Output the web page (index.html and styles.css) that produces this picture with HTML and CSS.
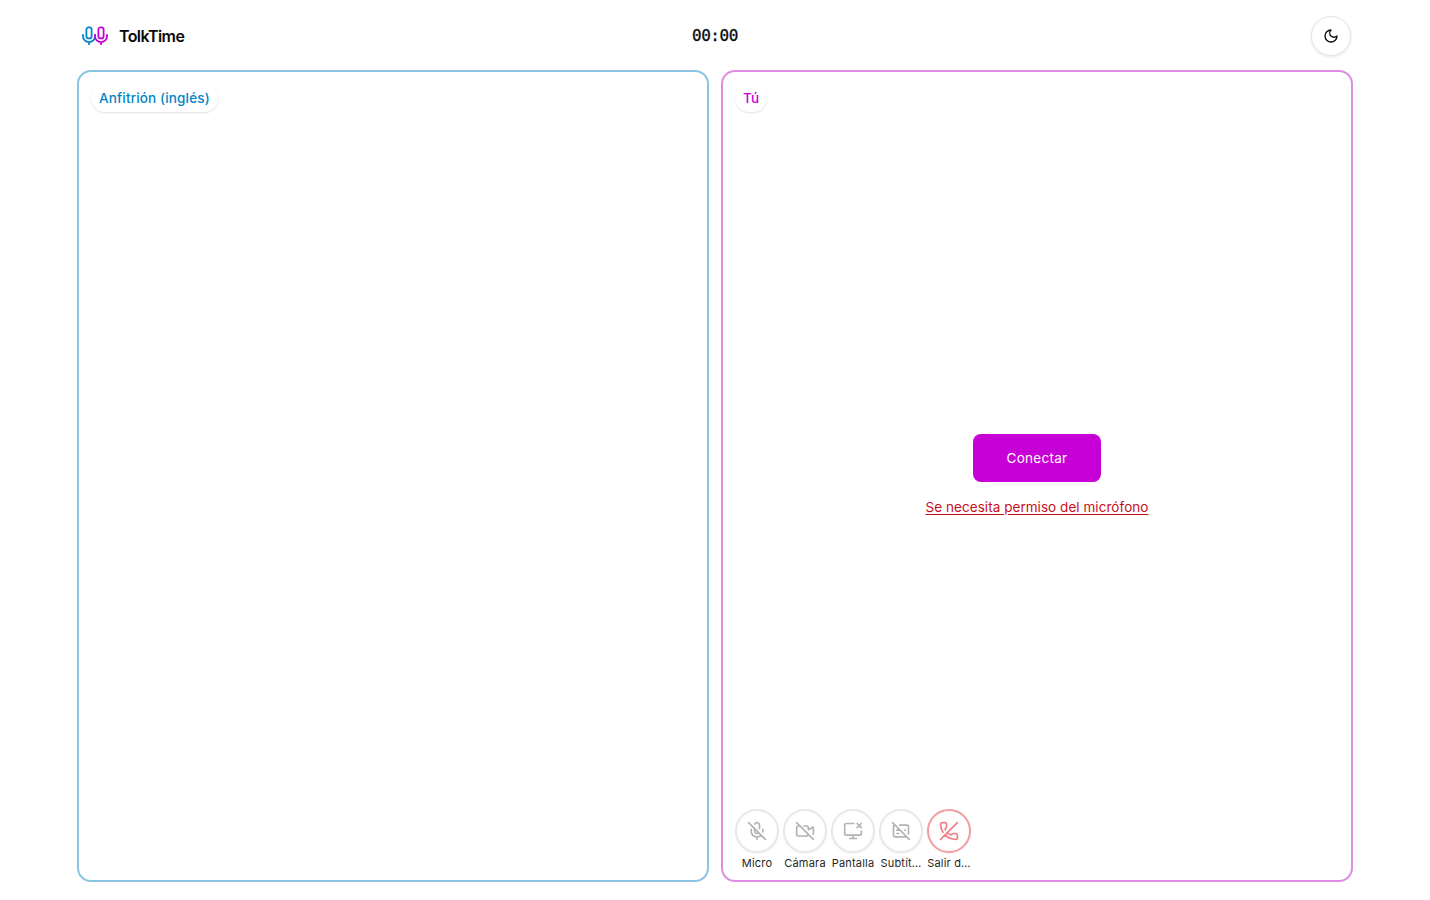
FILE: index.html
```html
<!DOCTYPE html>
<html lang="es">
<head>
    <meta charset="UTF-8">
    <meta name="viewport" content="width=device-width, initial-scale=1.0">
    <title>TolkTime</title>
    <link rel="stylesheet" href="styles.css">
</head>
<body>
    <div class="app">
        <header class="header">
            <div class="brand">
                <svg class="logo" viewBox="0 0 28 20" fill="none" stroke-width="1.8" stroke-linecap="round" stroke-linejoin="round">
                    <g stroke="#0084c7">
                        <rect x="5.4" y="1.4" width="5.2" height="11" rx="2.2"/>
                        <path d="M2 9v1.2a6 6 0 0 0 12 0V9M8 16.2v2"/>
                    </g>
                    <g stroke="#c800d8">
                        <rect x="17.4" y="1.4" width="5.2" height="11" rx="2.2"/>
                        <path d="M14 9v1.2a6 6 0 0 0 12 0V9M20 16.2v2"/>
                    </g>
                </svg>
                <span>TolkTime</span>
            </div>
            <div class="timer">00:00</div>
            <button class="theme-btn" aria-label="Tema">
                <svg class="icon" viewBox="0 0 24 24"><path d="M12 3a6 6 0 0 0 9 9 9 9 0 1 1-9-9Z"/></svg>
            </button>
        </header>

        <main class="panels">
            <section class="panel host">
                <span class="label">Anfitrión (inglés)</span>
            </section>

            <section class="panel you">
                <span class="label">Tú</span>
                <div class="join">
                    <button class="connect-btn">Conectar</button>
                    <a class="warning">Se necesita permiso del micrófono</a>
                </div>
                <div class="controls">
                    <div class="control">
                        <button aria-label="Micro">
                            <svg class="icon" viewBox="0 0 24 24"><path d="M2 2l20 20M18.89 13.23A7.12 7.12 0 0 0 19 12v-2M5 10v2a7 7 0 0 0 12 5M15 9.34V5a3 3 0 0 0-5.68-1.33M9 9v3a3 3 0 0 0 5.12 2.12M12 19v3"/></svg>
                        </button>
                        <span>Micro</span>
                    </div>
                    <div class="control">
                        <button aria-label="Cámara">
                            <svg class="icon" viewBox="0 0 24 24"><path d="M10.66 6H14a2 2 0 0 1 2 2v2.5l5.248-3.062A.5.5 0 0 1 22 7.87v8.196M16 16a2 2 0 0 1-2 2H4a2 2 0 0 1-2-2V8a2 2 0 0 1 2-2h2M2 2l20 20"/></svg>
                        </button>
                        <span>Cámara</span>
                    </div>
                    <div class="control">
                        <button aria-label="Pantalla">
                            <svg class="icon" viewBox="0 0 24 24"><path d="M13 3H4a2 2 0 0 0-2 2v10a2 2 0 0 0 2 2h16a2 2 0 0 0 2-2v-3M8 21h8M12 17v4M22 3l-5 5M17 3l5 5"/></svg>
                        </button>
                        <span>Pantalla</span>
                    </div>
                    <div class="control">
                        <button aria-label="Subtítulos">
                            <svg class="icon" viewBox="0 0 24 24"><path d="M10.5 5H19a2 2 0 0 1 2 2v8.5M17 11h-.5M19 19H5a2 2 0 0 1-2-2V7a2 2 0 0 1 2-2M2 2l20 20M7 11h4M7 15h2.5"/></svg>
                        </button>
                        <span>Subtít…</span>
                    </div>
                    <div class="control leave">
                        <button aria-label="Salir de la llamada">
                            <svg class="icon" viewBox="0 0 24 24"><path d="M10.1 13.9a14 14 0 0 0 3.732 2.668 1 1 0 0 0 1.213-.303l.355-.465A2 2 0 0 1 17 15h3a2 2 0 0 1 2 2v3a2 2 0 0 1-2 2 18 18 0 0 1-12.728-5.272M22 2L2 22M4.76 13.582A18 18 0 0 1 2 4a2 2 0 0 1 2-2h3a2 2 0 0 1 2 2v3a2 2 0 0 1-.8 1.6l-.468.351a1 1 0 0 0-.292 1.233 14 14 0 0 0 .244.473"/></svg>
                        </button>
                        <span>Salir d…</span>
                    </div>
                </div>
            </section>
        </main>
    </div>
</body>
</html>
```

FILE: styles.css
```css
* {
    box-sizing: border-box;
}

body {
    margin: 0;
    font-family: Inter, sans-serif;
    font-size: 14px;
    color: #0a0a0a;
    background-color: #fff;
}

button {
    font: inherit;
    padding: 0;
    cursor: pointer;
}

.app {
    max-width: 1300px;
    height: 900px;
    margin: 0 auto;
    padding: 12px 12px 18px;
    display: flex;
    flex-direction: column;
    gap: 10px;
}

.header {
    height: 48px;
    padding: 0 2px 0 4px;
    display: grid;
    grid-template-columns: 1fr auto 1fr;
    align-items: center;
}

.brand {
    display: flex;
    align-items: center;
    gap: 10px;
    font-size: 16px;
    font-weight: 600;
    letter-spacing: -0.6px;
}

.logo {
    width: 28px;
    height: 20px;
}

.timer {
    padding: 0 2px 2px 0;
    font-family: "DejaVu Sans Mono", monospace;
    font-size: 16px;
    letter-spacing: -0.4px;
    -webkit-text-stroke: 0.3px currentColor;
}

.icon {
    display: block;
    width: 20px;
    height: 20px;
    fill: none;
    stroke: currentColor;
    stroke-width: 2;
    stroke-linecap: round;
    stroke-linejoin: round;
}

.theme-btn {
    justify-self: end;
    width: 40px;
    height: 40px;
    display: grid;
    place-items: center;
    color: #0a0a0a;
    background-color: #fff;
    border: 1px solid #e5e5e5;
    border-radius: 50%;
    box-shadow: 0 1px 3px rgba(0, 0, 0, 0.1);
}

.theme-btn .icon {
    width: 16px;
    height: 16px;
}

.panels {
    flex: 1;
    display: grid;
    grid-template-columns: 1fr 1fr;
    gap: 12px;
}

.panel {
    display: flex;
    flex-direction: column;
    align-items: flex-start;
    padding: 12px 12px 9px;
    border: 2px solid;
    border-radius: 14px;
}

.host {
    border-color: #8bc4e3;
}

.you {
    border-color: #df8ce5;
}

.label {
    height: 28px;
    padding: 0 8px;
    font-size: 13.5px;
    line-height: 28px;
    font-weight: 450;
    letter-spacing: 0.16px;
    border-radius: 14px;
    box-shadow: 0 1px 2px rgba(0, 0, 0, 0.12);
}

.host .label {
    color: #0084c7;
}

.you .label {
    color: #c800d8;
}

.join {
    flex: 1;
    align-self: stretch;
    display: flex;
    flex-direction: column;
    align-items: center;
    justify-content: center;
    gap: 15px;
    padding-top: 29px;
}

.connect-btn {
    width: 128px;
    height: 48px;
    color: #fff;
    font-size: 13.5px;
    letter-spacing: 0.27px;
    background-color: #c800d8;
    border: none;
    border-radius: 8px;
}

.warning {
    font-size: 13.5px;
    line-height: 20px;
    letter-spacing: 0.05px;
    color: #c8101a;
    text-decoration: underline;
    text-underline-offset: 2px;
}

.controls {
    display: flex;
    gap: 4px;
}

.control {
    width: 44px;
    text-align: center;
}

.control button {
    width: 44px;
    height: 44px;
    display: grid;
    place-items: center;
    color: #b3b3b3;
    background-color: #fff;
    border: 2px solid #e8e8e8;
    border-radius: 50%;
    box-shadow: 0 1px 2px rgba(0, 0, 0, 0.05);
}

.control.leave button {
    color: #ef7f84;
    border-color: #f39da1;
}

.control span {
    display: block;
    margin-top: 2px;
    font-size: 11px;
    line-height: 16px;
    letter-spacing: 0.2px;
    color: #1f1f1f;
    white-space: nowrap;
}
```
